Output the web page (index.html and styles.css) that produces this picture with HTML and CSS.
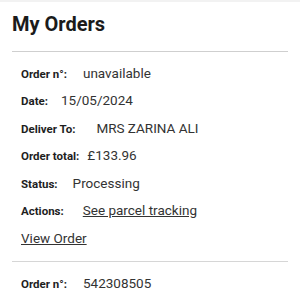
FILE: index.html
```html
<!DOCTYPE html>
<html lang="en">
<head>
    <meta charset="UTF-8">
    <meta name="viewport" content="width=device-width, initial-scale=1.0">
    <title>My Orders</title>
    <link rel="stylesheet" href="styles.css">
</head>
<body>
    <div class="page">
        <h1>My Orders</h1>

        <div class="order">
            <div class="row"><span class="label">Order n°:</span><span class="value gap-16">unavailable</span></div>
            <div class="row"><span class="label">Date:</span><span class="value gap-13">15/05/2024</span></div>
            <div class="row"><span class="label">Deliver To:</span><span class="value gap-21">MRS ZARINA ALI</span></div>
            <div class="row"><span class="label">Order total:</span><span class="value gap-8">£133.96</span></div>
            <div class="row"><span class="label">Status:</span><span class="value gap-15">Processing</span></div>
            <div class="row"><span class="label">Actions:</span><a class="value gap-19" href="#">See parcel tracking</a></div>
            <div class="row"><a class="value" href="#">View Order</a></div>
        </div>

        <div class="order">
            <div class="row"><span class="label">Order n°:</span><span class="value gap-16">542308505</span></div>
        </div>
    </div>
</body>
</html>
```

FILE: styles.css
```css
body {
    margin: 0;
    font-family: Roboto, "Liberation Sans", Arial, sans-serif;
    color: #222;
    background-color: #fff;
    border-top: 2px solid #f2f2f2;
}

.page {
    padding: 0 12px;
}

h1 {
    margin: 0;
    padding: 10px 0 14.5px;
    font-size: 20px;
    font-weight: bold;
    color: #1b1b1b;
    border-bottom: 1px solid #cfcfcf;
}

.order {
    padding: 8px 9px 9px;
    border-bottom: 1px solid #d6d6d6;
}

.row {
    display: flex;
    align-items: baseline;
    height: 27.5px;
    line-height: 27.5px;
}

.label {
    font-size: 11.5px;
    font-weight: bold;
    color: #1e1e1e;
}

.value {
    font-size: 13.5px;
    color: #333;
}

a.value {
    color: #333;
    text-decoration: underline;
}

.gap-8 { margin-left: 8px; }
.gap-13 { margin-left: 13px; }
.gap-15 { margin-left: 15px; }
.gap-16 { margin-left: 16px; }
.gap-19 { margin-left: 19px; }
.gap-21 { margin-left: 21px; }
```
